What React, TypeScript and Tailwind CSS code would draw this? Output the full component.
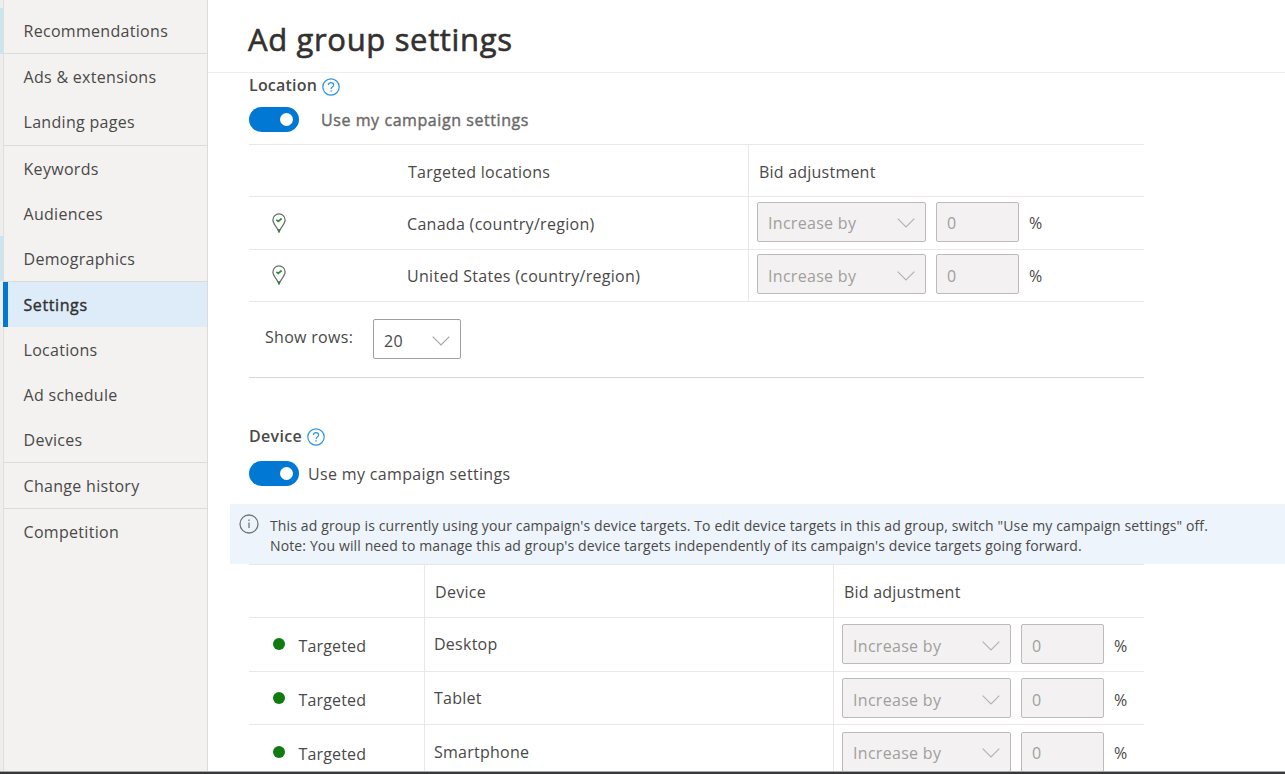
import { useState } from "react";

interface NavItem {
  label: string;
  divider?: boolean;
  tall?: boolean;
}

interface AdjustmentProps {
  value: string;
}

const navItems: NavItem[] = [
  { label: "Recommendations", divider: true },
  { label: "Ads & extensions" },
  { label: "Landing pages", divider: true, tall: true },
  { label: "Keywords" },
  { label: "Audiences" },
  { label: "Demographics", divider: true },
  { label: "Settings" },
  { label: "Locations" },
  { label: "Ad schedule" },
  { label: "Devices", divider: true },
  { label: "Change history", divider: true },
  { label: "Competition" },
];

const locations = ["Canada (country/region)", "United States (country/region)"];
const devices = ["Desktop", "Tablet", "Smartphone"];

function Chevron({ className }: { className: string }) {
  return (
    <svg width="18" height="10" viewBox="0 0 18 10" fill="none" stroke="currentColor" strokeWidth="1.2" className={className}>
      <path d="M0.7 0.7L9 9l8.3-8.3" />
    </svg>
  );
}

function HelpIcon() {
  return (
    <svg width="18" height="18" viewBox="0 0 18 18" fill="none" stroke="#2b93dc" strokeWidth="1.2">
      <circle cx="9" cy="9" r="8.2" />
      <path d="M6.4 7.1c0-1.5 1.1-2.5 2.6-2.5s2.6.9 2.6 2.3c0 1.9-2.5 2-2.5 4.1" />
      <path d="M9.1 12.2v1.5" />
    </svg>
  );
}

function PinIcon() {
  return (
    <svg width="14" height="20" viewBox="0 0 14 20" fill="none" className="-mt-[2px]">
      <path
        d="M7 18.8C6.3 15.8.9 11 .9 6.900a6.100 6.100 0 0 1 12.200 0C13.100 11 7.700 15.800 7 18.800z"
        stroke="#6a736c"
        strokeWidth="1.3"
      />
      <path d="M6 16.2l1 2.8 1-2.8" stroke="#3f7a4a" strokeWidth="1.3" />
      <path d="M4.3 6.9l2 1.6 3.3-3" stroke="#2e8b3a" strokeWidth="1.7" />
    </svg>
  );
}

function Toggle() {
  const [on, setOn] = useState(true);

  return (
    <button
      onClick={() => setOn(!on)}
      className={`flex h-[25px] w-[50px] items-center rounded-full px-[6px] ${on ? "justify-end bg-[#0078d4]" : "justify-start bg-[#8a8886]"}`}
    >
      <span className="size-[13px] rounded-full bg-white" />
    </button>
  );
}

function BidAdjustment({ value }: AdjustmentProps) {
  return (
    <div className="flex items-center text-[#a19f9d]">
      <div className="flex h-10 w-[169px] items-center justify-between rounded-[2px] border border-[#bdbbba] bg-[#f3f1f1] px-[10px]">
        <span className="pt-[3px]">Increase by</span>
        <Chevron className="mt-[3px] text-[#b5b3b2]" />
      </div>
      <div className="ml-[10px] flex h-10 w-[83px] items-center rounded-[2px] border border-[#bdbbba] bg-[#f3f1f1] pl-[10px]">
        <span className="pt-[3px]">{value}</span>
      </div>
      <span className="ml-[10px] pt-[3px] text-[#4a4948]">%</span>
    </div>
  );
}

function Sidebar() {
  return (
    <aside className="flex w-[208px] shrink-0 border-r border-[#dddbda] bg-[#f3f2f1]">
      <div className="flex w-1 shrink-0 flex-col border-r border-[#e0dfdd] bg-[#efeeec] pt-2">
        <div className="h-[46px] bg-[#c9e6f0]" />
        <div className="mt-[182px] h-[45px] bg-[#c9e6f0]" />
      </div>
      <nav className="flex-1 pt-2">
        {navItems.map((item) => (
          <div key={item.label} className={item.divider ? "border-b border-[#dddbda]" : ""}>
            <a
              className={`flex items-center ${item.tall ? "h-[46px]" : "h-[45px]"} ${
                item.label === "Settings"
                  ? "-ml-px border-l-[5px] border-[#0078d4] bg-[#deebf9] pl-[15.5px] tracking-[0.6px] text-[#323130] [-webkit-text-stroke:0.4px]"
                  : "pl-[19.5px]"
              }`}
            >
              {item.label}
            </a>
          </div>
        ))}
      </nav>
    </aside>
  );
}

export default function App() {
  return (
    <div className="flex h-[774px] flex-col overflow-hidden bg-white font-['Open_Sans',sans-serif] text-base tracking-[0.3px] text-[#4a4948]">
      <div className="flex min-h-0 flex-1 overflow-hidden">
        <Sidebar />
        <main className="min-w-0 flex-1">
          <header className="h-[73px] border-b border-[#efeeee] pt-[18px] pl-10">
            <h1 className="text-[31px] leading-[42px] tracking-[0.65px] text-[#323130] [-webkit-text-stroke:0.6px]">Ad group settings</h1>
          </header>

          <section className="ml-[41px] w-[895px]">
            <div className="flex h-[27px] items-center gap-[5px]">
              <h2 className="pb-[4px] font-semibold tracking-[0.2px]">Location</h2>
              <HelpIcon />
            </div>
            <div className="mt-[7px] flex items-center">
              <Toggle />
              <span className="ml-[22px] tracking-[0.57px] text-[#6b6968] [-webkit-text-stroke:0.4px]">Use my campaign settings</span>
            </div>
            <div className="mt-3 border-t border-[#e9e7e8]">
              <div className="flex h-[52px] border-b border-[#e9e7e8]">
                <div className="flex w-[500px] items-center border-r border-[#e9e7e8] pt-[3px] pl-[159px] tracking-[0.25px]">Targeted locations</div>
                <div className="flex items-center pt-[3px] pl-[10px] tracking-[0.22px]">Bid adjustment</div>
              </div>
              {locations.map((name) => (
                <div key={name} className="flex h-[52.5px] border-b border-[#e9e7e8]">
                  <div className="flex w-[500px] items-center border-r border-[#e9e7e8] pt-[2px] pl-[23px]">
                    <PinIcon />
                    <span className="ml-[121px]">{name}</span>
                  </div>
                  <div className="flex items-center pb-[2px] pl-2">
                    <BidAdjustment value="0" />
                  </div>
                </div>
              ))}
            </div>
            <div className="flex h-[76px] items-start border-b border-[#d8d6d6] pl-4">
              <span className="w-[108px] pt-[23px]">Show rows:</span>
              <div className="mt-[17px] flex h-10 w-[88px] items-center justify-between rounded-[2px] border border-[#a19f9d] px-[10px]">
                <span className="pt-[3px]">20</span>
                <Chevron className="mt-[3px] text-[#a8a6a5]" />
              </div>
            </div>
          </section>

          <section className="mt-[47px]">
            <div className="ml-[41px] flex h-[24px] items-center gap-[5px]">
              <h2 className="pb-[3px] font-semibold">Device</h2>
              <HelpIcon />
            </div>
            <div className="mt-[12px] ml-[41px] flex items-center">
              <Toggle />
              <span className="ml-[9px] tracking-[0.34px]">Use my campaign settings</span>
            </div>
            <div className="mt-[18px] ml-[22px] flex h-[60px] bg-[#edf4fb] pt-[10px] pl-[9px] text-[14px] leading-[20px] tracking-[0.13px]">
              <svg width="20" height="20" viewBox="0 0 20 20" fill="none" stroke="#74767a" strokeWidth="1.3">
                <circle cx="10" cy="10" r="9" />
                <path d="M10 8.5v5.5M10 5.5v1.4" />
              </svg>
              <p className="ml-[11px] pt-[2px] whitespace-nowrap">
                This ad group is currently using your campaign's device targets. To edit device targets in this ad group, switch "Use my campaign settings" off.
                <br />
                Note: You will need to manage this ad group's device targets independently of its campaign's device targets going forward.
              </p>
            </div>
            <div className="ml-[41px] w-[895px] border-t border-[#e9e7e8]">
              <div className="flex h-[53px] border-b border-[#e9e7e8]">
                <div className="w-[176px] border-r border-[#e9e7e8]" />
                <div className="flex w-[409px] items-center border-r border-[#e9e7e8] pt-px pl-[10px]">Device</div>
                <div className="flex items-center pt-px pl-[10px] tracking-[0.22px]">Bid adjustment</div>
              </div>
              {devices.map((name) => (
                <div key={name} className="flex h-[53.7px] border-b border-[#e9e7e8]">
                  <div className="flex w-[176px] items-center border-r border-[#e9e7e8] pl-[23.5px]">
                    <span className="size-3 rounded-full bg-[#107c10]" />
                    <span className="ml-[14px] pt-[4px] tracking-[0.15px]">Targeted</span>
                  </div>
                  <div className="flex w-[409px] items-center border-r border-[#e9e7e8] pl-[9px] tracking-[0.25px]">{name}</div>
                  <div className="flex items-center pl-[8px]">
                    <BidAdjustment value="0" />
                  </div>
                </div>
              ))}
            </div>
          </section>
        </main>
      </div>
      <div className="h-[3px] shrink-0 border-t border-[#a8a8aa] bg-[#37383c]" />
    </div>
  );
}
